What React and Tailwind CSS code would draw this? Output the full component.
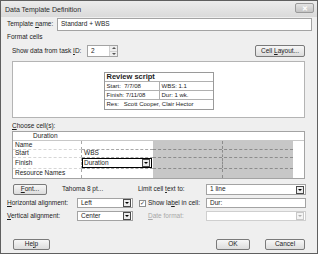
import React from "react";

const Arrow = ({ disabled }) => (
  <div
    className={`w-[8px] h-[8px] flex items-center justify-center border ${
      disabled ? "border-[#c8c8c8] bg-[#f4f4f4]" : "border-[#4a4a4a] bg-[#ececec]"
    }`}
  >
    <div
      className={`w-0 h-0 border-l-[2px] border-r-[2px] border-t-[2px] border-l-transparent border-r-transparent ${
        disabled ? "border-t-[#b0b0b0]" : "border-t-black"
      }`}
    />
  </div>
);

const Select = ({ text, className = "", disabled }) => (
  <div
    className={`h-full flex items-center bg-white border ${
      disabled ? "border-[#cfcfcf]" : "border-[#a3a3a3]"
    } pl-[3px] pr-[1px] ${className}`}
  >
    <span className="flex-1 leading-none">{text}</span>
    <Arrow disabled={disabled} />
  </div>
);

const Btn = ({ children, className = "" }) => (
  <div
    className={`h-full flex items-center justify-center rounded-[2px] border border-[#7a7a7a] bg-gradient-to-b from-[#f7f7f7] to-[#dcdcdc] leading-none ${className}`}
  >
    <span>{children}</span>
  </div>
);

export default function App() {
  const rows = [
    ["Name", "", false],
    ["Start", "WBS", false],
    ["Finish", "Duration", true],
    ["Resource Names", "", false],
  ];
  return (
    <div
      className="w-[318px] h-[254px] bg-[#efefef] border border-[#5f5f5f] flex flex-col text-[6.5px] text-[#1c1c1c] overflow-hidden"
      style={{ fontFamily: '"Liberation Sans", Arial, sans-serif' }}
    >
      {/* Title bar */}
      <div className="h-[16px] flex items-center bg-gradient-to-b from-[#ececec] to-[#dadada] pl-[4px] pr-[3px]">
        <span className="flex-1 text-[7px] text-[#2a2a2a] leading-none">Data Template Definition</span>
        <div className="w-[19px] h-[10px] mt-[-2px] rounded-[2px] border border-[#9a9a9a] bg-gradient-to-b from-[#e4e4e4] to-[#c4c4c4] flex items-center justify-center text-[7px] text-white leading-none font-bold">
          ✕
        </div>
      </div>

      <div className="flex flex-col pl-[6px] pr-[5px]">
        {/* Template name */}
        <div className="mt-[1px] h-[13px] flex items-center">
          <span className="w-[50px] leading-none">
            Template <u>n</u>ame:
          </span>
          <div className="flex-1 h-full bg-white border border-[#a3a3a3] flex items-center pl-[3px] leading-none">
            Standard + WBS
          </div>
        </div>

        <div className="mt-[1px] h-[10px] flex items-center leading-none">Format cells</div>

        {/* Show data row */}
        <div className="mt-[3px] h-[12px] flex items-center ml-[5px] mr-[7px]">
          <span className="w-[75px] leading-none">
            Show data from task <u>I</u>D:
          </span>
          <div className="w-[31px] h-full bg-white border border-[#a3a3a3] flex items-center pl-[3px]">
            <span className="flex-1 leading-none">2</span>
            <div className="w-[8px] h-full flex flex-col border-l border-[#d0d0d0]">
              <div className="flex-1 flex items-center justify-center bg-[#eeeeee] border-b border-[#d0d0d0]">
                <div className="w-0 h-0 border-l-[2px] border-r-[2px] border-b-[2px] border-l-transparent border-r-transparent border-b-[#555]" />
              </div>
              <div className="flex-1 flex items-center justify-center bg-[#eeeeee]">
                <div className="w-0 h-0 border-l-[2px] border-r-[2px] border-t-[2px] border-l-transparent border-r-transparent border-t-[#555]" />
              </div>
            </div>
          </div>
          <div className="flex-1" />
          <Btn className="w-[50px]">
            Cell <u>L</u>ayout...
          </Btn>
        </div>

        {/* Preview */}
        <div className="mt-[4px] h-[57px] ml-[5px] mr-[7px] bg-white border border-[#b4b4b4] flex items-center justify-center">
          <div className="w-[110px] mt-[2px] border border-[#9a9a9a] flex flex-col text-[6px] leading-none">
            <div className="h-[9px] flex items-center pl-[2px] text-[7.5px] font-bold border-b border-[#b0b0b0]">
              Review script
            </div>
            <div className="h-[9px] flex border-b border-[#b0b0b0]">
              <div className="w-[55px] flex items-center pl-[2px] border-r border-[#b0b0b0] whitespace-pre">Start:  7/7/08</div>
              <div className="flex-1 flex items-center pl-[2px]">WBS: 1.1</div>
            </div>
            <div className="h-[9px] flex border-b border-[#b0b0b0]">
              <div className="w-[55px] flex items-center pl-[2px] border-r border-[#b0b0b0]">Finish: 7/11/08</div>
              <div className="flex-1 flex items-center pl-[2px]">Dur: 1 wk.</div>
            </div>
            <div className="h-[9px] flex items-center pl-[2px] whitespace-pre">Res:   Scott Cooper, Clair Hector</div>
          </div>
        </div>

        <div className="mt-[3px] h-[10px] ml-[5px] flex items-center leading-none">
          <span>
            <u>C</u>hoose cell(s):
          </span>
        </div>

        {/* Grid */}
        <div className="h-[48px] ml-[5px] mr-[7px] bg-white border border-[#a3a3a3] flex flex-col leading-none">
          <div className="h-[9px] flex items-center pl-[20px] border-b border-[#c8c8c8] shrink-0">Duration</div>
          {rows.map(([a, b, sel], i) => {
            const last = i === rows.length - 1;
            return (
              <div key={i} className="flex-1 flex">
                <div
                  className={`w-[69px] flex items-center pl-[2px] border-r border-dashed border-r-[#a8a8a8] ${
                    last ? "" : "border-b border-b-[#d6d6d6]"
                  }`}
                >
                  {a}
                </div>
                <div className={`w-[71px] flex ${last ? "" : "border-b border-dashed border-b-[#a8a8a8]"}`}>
                  {sel ? (
                    <div className="flex-1 flex items-center pl-[1px] pr-[1px] mr-[1px] border border-black">
                      <span className="flex-1">{b}</span>
                      <Arrow />
                    </div>
                  ) : (
                    <div className="flex-1 flex items-center pl-[2px]">{b}</div>
                  )}
                </div>
                <div className={`w-[140px] flex bg-[#c7c7c7] ${last ? "" : "border-b border-dashed border-b-[#8c8c8c]"}`}>
                  <div className="w-[70px] border-r border-dashed border-r-[#8c8c8c]" />
                  <div className="flex-1" />
                </div>
                <div className="flex-1" />
              </div>
            );
          })}
        </div>

        {/* Font row */}
        <div className="mt-[5px] h-[11px] flex items-center">
          <Btn className="w-[34px] ml-[6px]">
            <u>F</u>ont...
          </Btn>
          <span className="ml-[15px] w-[76px] leading-none">Tahoma 8 pt...</span>
          <span className="w-[68px] leading-none">
            Limit cell <u>t</u>ext to:
          </span>
          <Select text="1 line" className="w-[100px]" />
        </div>

        {/* Horizontal alignment */}
        <div className="mt-[3px] h-[10px] flex items-center">
          <span className="w-[70px] leading-none">
            <u>H</u>orizontal alignment:
          </span>
          <Select text="Left" className="w-[56px]" />
          <div className="ml-[6px] w-[7px] h-[7px] bg-white border border-[#8e8f8f] flex items-center justify-center text-[6px] leading-none text-[#333]">
            ✓
          </div>
          <span className="ml-[2px] w-[58px] leading-none">
            Show la<u>b</u>el in cell:
          </span>
          <div className="w-[100px] h-full bg-white border border-[#a3a3a3] flex items-center pl-[3px] leading-none">
            Dur:
          </div>
        </div>

        {/* Vertical alignment */}
        <div className="mt-[3px] h-[10px] flex items-center">
          <span className="w-[70px] leading-none">
            <u>V</u>ertical alignment:
          </span>
          <Select text="Center" className="w-[56px]" />
          <span className="ml-[15px] w-[58px] leading-none text-[#a8a8a8]">
            <u>D</u>ate format:
          </span>
          <Select text="" className="w-[100px]" disabled />
        </div>

        {/* Buttons */}
        <div className="mt-[18px] h-[11px] flex items-center">
          <Btn className="w-[37px] ml-[6px]">
            He<u>l</u>p
          </Btn>
          <div className="flex-1" />
          <Btn className="w-[34px]">OK</Btn>
          <Btn className="w-[40px] ml-[15px] mr-[7px]">Cancel</Btn>
        </div>
      </div>
    </div>
  );
}
